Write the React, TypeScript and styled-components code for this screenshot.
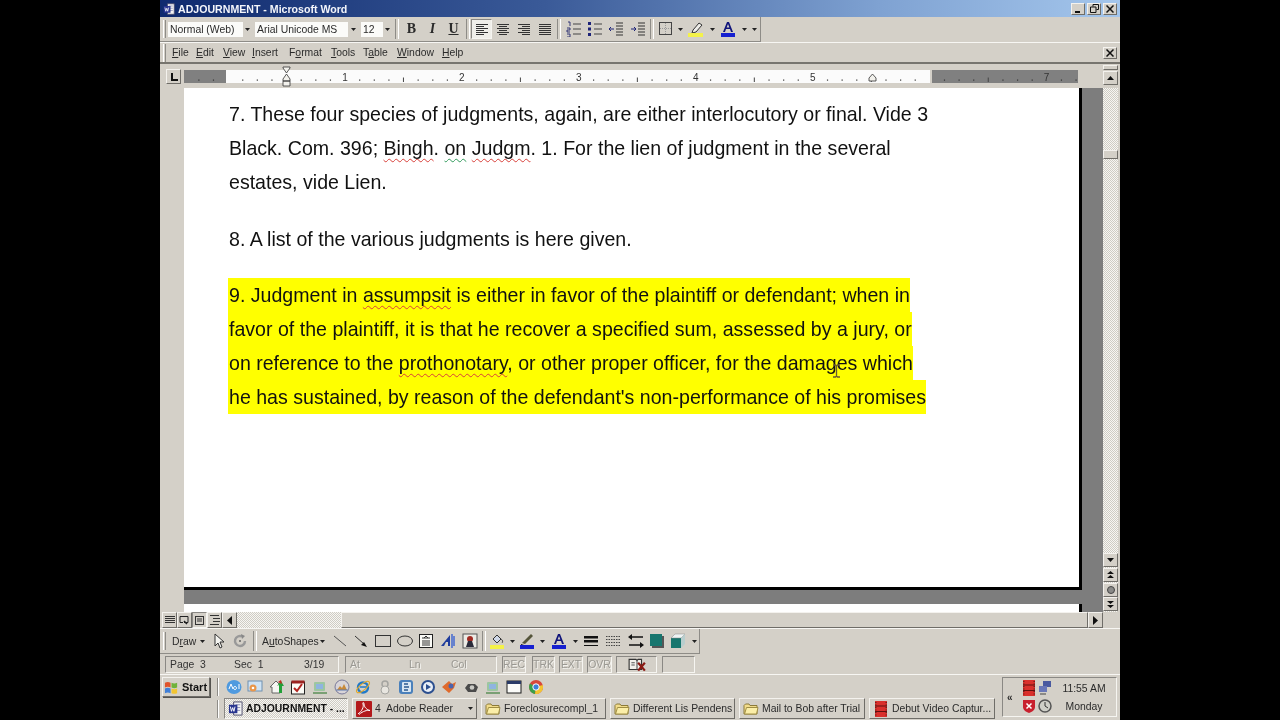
import React from "react";
import styled, { createGlobalStyle, css } from "styled-components";

const GlobalStyle = createGlobalStyle`
  html, body { margin: 0; padding: 0; background: #000; }
  * { box-sizing: border-box; }
`;

const UI = `"Liberation Sans", Arial, sans-serif`;
const FACE = "#d4d0c8";
const raised = css`
  border: 1px solid;
  border-color: #f4f2ee #6f6d68 #6f6d68 #f4f2ee;
`;
const sunken = css`
  border: 1px solid;
  border-color: #8a8884 #f6f5f1 #f6f5f1 #8a8884;
`;
const dither = css`
  background: repeating-conic-gradient(#cfccc4 0 25%, #f7f6f3 0 50%) 0 0 / 2px 2px;
`;

const Stage = styled.div`
  width: 1280px;
  height: 720px;
  background: #000;
  display: flex;
  justify-content: center;
  overflow: hidden;
`;

const Screen = styled.div`
  width: 960px;
  height: 720px;
  background: ${FACE};
  display: flex;
  flex-direction: column;
  font-family: ${UI};
  font-size: 10.4px;
  color: #2b2b2b;
  filter: blur(0.45px);
`;

const TitleBar = styled.div`
  height: 17px;
  flex: none;
  display: flex;
  align-items: center;
  padding: 0 3px;
  gap: 3px;
  background: linear-gradient(90deg, #0f2a6e 0%, #3a5a98 40%, #7fa2d2 75%, #a4c6ec 100%);
`;

const TitleText = styled.div`
  flex: 1;
  color: #f4f6fb;
  font-weight: 700;
  font-size: 10.6px;
  white-space: nowrap;
`;

const WinGroup = styled.div`
  display: flex;
  gap: 2px;
`;

const WinButton = styled.div`
  ${raised}
  width: 14px;
  height: 12px;
  background: ${FACE};
  display: flex;
  align-items: center;
  justify-content: center;
`;

const ToolRow = styled.div<{ $h: number }>`
  height: ${(p) => p.$h}px;
  flex: none;
  display: flex;
  align-items: center;
  background: ${FACE};
`;

const ToolBand = styled.div<{ $w: number }>`
  width: ${(p) => p.$w}px;
  height: 100%;
  display: flex;
  align-items: center;
  border-right: 1px solid #8e8c87;
  border-bottom: 1px solid #8e8c87;
`;

const Grip = styled.div<{ $left: number; $right: number }>`
  width: 3px;
  height: 18px;
  flex: none;
  margin: 0 ${(p) => p.$right}px 0 ${(p) => p.$left}px;
  border-left: 1px solid #fff;
  border-right: 1px solid #8e8c87;
`;

const Combo = styled.div<{ $w: number; $arrow: number; $after: number }>`
  width: ${(p) => p.$w}px;
  height: 15px;
  flex: none;
  margin-right: ${(p) => p.$after}px;
  background: #fbfbf9;
  display: flex;
  align-items: center;
  justify-content: space-between;
  padding-left: 2px;
  white-space: nowrap;
  > i {
    width: ${(p) => p.$arrow}px;
    height: 15px;
    background: ${FACE};
    display: flex;
    align-items: center;
    justify-content: center;
  }
`;

const Slot = styled.div<{ $w: number; $on?: boolean }>`
  width: ${(p) => p.$w}px;
  height: 20px;
  flex: none;
  display: flex;
  align-items: center;
  justify-content: center;
  ${(p) =>
    p.$on &&
    css`
      ${sunken}
      background: #efeee9;
    `}
`;

const Glyph = styled(Slot)<{ $italic?: boolean; $under?: boolean }>`
  font-family: "Liberation Serif", serif;
  font-weight: 700;
  font-size: 14px;
  font-style: ${(p) => (p.$italic ? "italic" : "normal")};
  text-decoration: ${(p) => (p.$under ? "underline" : "none")};
`;

const Sep = styled.div<{ $w: number }>`
  width: ${(p) => p.$w}px;
  height: 20px;
  flex: none;
  display: flex;
  justify-content: center;
  &::after {
    content: "";
    width: 2px;
    height: 100%;
    border-left: 1px solid #8e8c87;
    border-right: 1px solid #fff;
  }
`;

const MenuRow = styled(ToolRow)`
  border-top: 1px solid #f7f6f3;
  border-bottom: 2px solid #77756f;
  padding-right: 3px;
`;

const MenuItem = styled.div<{ $w: number }>`
  width: ${(p) => p.$w}px;
  flex: none;
  white-space: nowrap;
`;

const RowSpacer = styled.div`
  flex: 1;
`;

const RulerRow = styled.div`
  height: 24px;
  flex: none;
  display: flex;
  align-items: flex-start;
`;

const TabStop = styled.div`
  ${raised}
  width: 15px;
  height: 15px;
  flex: none;
  margin: 5px 3px 0 6px;
  display: flex;
  align-items: center;
  justify-content: center;
`;

const RulerSvg = styled.svg`
  flex: none;
  margin-top: 2px;
  overflow: visible;
  font-family: ${UI};
`;

const ScrollColumn = styled.div`
  width: 15px;
  flex: none;
  margin-left: 25px;
`;

const Splitter = styled.div`
  height: 5px;
  margin-top: 1px;
  ${raised}
`;

const ArrowButton = styled.div<{ $top?: number; $h?: number }>`
  ${raised}
  width: 15px;
  height: ${(p) => p.$h ?? 14}px;
  flex: none;
  margin-top: ${(p) => p.$top ?? 0}px;
  background: ${FACE};
  display: flex;
  align-items: center;
  justify-content: center;
`;

const DocRow = styled.div`
  height: 524px;
  flex: none;
  display: flex;
`;

const LeftStrip = styled.div`
  width: 24px;
  flex: none;
  background: ${FACE};
`;

const Canvas = styled.div`
  width: 919px;
  flex: none;
  background: #7d7d7d;
  display: flex;
  flex-direction: column;
  overflow: hidden;
`;

const Page = styled.div`
  position: relative;
  width: 898px;
  height: 502px;
  flex: none;
  background: #fff;
  border-right: 3px solid #000;
  border-bottom: 3px solid #000;
  padding: 9px 0 0 44px;
  font-family: "Liberation Sans", Arial, sans-serif;
  font-size: 19.58px;
  color: #111;
`;

const NextPage = styled.div`
  width: 898px;
  height: 8px;
  margin-top: 14px;
  flex: none;
  background: #fff;
  border-right: 3px solid #000;
`;

const Para = styled.div`
  margin-bottom: 22.5px;
`;

const Line = styled.div<{ $mark?: boolean }>`
  height: 34px;
  line-height: 34px;
  width: fit-content;
  padding-left: 1px;
  white-space: nowrap;
  background: ${(p) => (p.$mark ? "#ffff00" : "transparent")};
`;

const Spell = styled.span<{ $green?: boolean }>`
  text-decoration: underline wavy ${(p) => (p.$green ? "#2f9a5a" : "#d8403a")} 1px;
  text-decoration-skip-ink: none;
  text-underline-offset: 3px;
`;

const Cursor = styled.svg`
  position: absolute;
  left: 648px;
  top: 276px;
`;

const VScroll = styled.div`
  width: 15px;
  flex: none;
  display: flex;
  flex-direction: column;
  ${dither}
`;

const Thumb = styled.div`
  ${raised}
  height: 9px;
  margin-top: 62px;
  background: ${FACE};
`;

const VScrollEnd = styled.div`
  margin-top: auto;
  padding-bottom: 1px;
  display: flex;
  flex-direction: column;
`;

const HScroll = styled.div`
  height: 16px;
  flex: none;
  display: flex;
  align-items: stretch;
  padding-left: 2px;
  padding-right: 17px;
`;

const ViewButton = styled.div<{ $on?: boolean }>`
  ${(p) => (p.$on ? sunken : raised)}
  width: 15px;
  flex: none;
  display: flex;
  align-items: center;
  justify-content: center;
`;

const HTrack = styled.div`
  width: 104px;
  flex: none;
  ${dither}
`;

const HThumb = styled.div`
  ${raised}
  flex: 1;
  background: ${FACE};
`;

const DrawRow = styled(ToolRow)`
  border-top: 1px solid #f7f6f3;
`;

const DrawLabel = styled.div<{ $w: number }>`
  width: ${(p) => p.$w}px;
  flex: none;
  white-space: nowrap;
`;

const StatusRow = styled.div`
  height: 21px;
  flex: none;
  display: flex;
  align-items: center;
  padding: 1px 0 0 5px;
  border-bottom: 1px solid #f7f6f3;
`;

const StatusCell = styled.div<{ $w: number; $after: number; $off?: boolean; $center?: boolean }>`
  ${sunken}
  width: ${(p) => p.$w}px;
  height: 17px;
  flex: none;
  margin-right: ${(p) => p.$after}px;
  display: flex;
  align-items: center;
  justify-content: ${(p) => (p.$center ? "center" : "flex-start")};
  padding-left: ${(p) => (p.$center ? 0 : 4)}px;
  white-space: nowrap;
  color: ${(p) => (p.$off ? "#9a9892" : "#333")};
  text-shadow: ${(p) => (p.$off ? "1px 1px 0 #f2f1ed" : "none")};
`;

const StatusPart = styled.div<{ $w: number }>`
  width: ${(p) => p.$w}px;
  flex: none;
`;

const Taskbar = styled.div`
  height: 45px;
  flex: none;
  display: flex;
`;

const TaskColumn = styled.div`
  width: 842px;
  flex: none;
  display: flex;
  flex-direction: column;
`;

const TopRow = styled.div`
  height: 22px;
  flex: none;
  display: flex;
  align-items: center;
  padding: 2px 0 0 2px;
`;

const StartButton = styled.div`
  ${raised}
  width: 48px;
  height: 20px;
  flex: none;
  display: flex;
  align-items: center;
  gap: 3px;
  padding-left: 1px;
  font-weight: 700;
  font-size: 11px;
  color: #111;
  box-shadow: 1px 1px 0 #55534f;
`;

const LaunchGrip = styled.div<{ $left: number; $right: number }>`
  width: 2px;
  height: 18px;
  flex: none;
  margin: 0 ${(p) => p.$right}px 0 ${(p) => p.$left}px;
  border-left: 1px solid #8e8c87;
  border-right: 1px solid #fff;
`;

const Launch = styled.div`
  display: flex;
  width: 21.57px;
  flex: none;
  justify-content: center;
`;

const ButtonRow = styled.div`
  height: 23px;
  flex: none;
  display: flex;
  align-items: center;
  padding-left: 57px;
  gap: 4px;
`;

const TaskButton = styled.div<{ $w: number; $on?: boolean }>`
  ${(p) => (p.$on ? sunken : raised)}
  width: ${(p) => p.$w}px;
  height: 21px;
  flex: none;
  display: flex;
  align-items: center;
  gap: 3px;
  padding: 0 3px;
  white-space: nowrap;
  overflow: hidden;
  font-weight: ${(p) => (p.$on ? 700 : 400)};
  color: ${(p) => (p.$on ? "#111" : "#2b2b2b")};
  ${(p) => p.$on && dither}
  > span {
    flex: 1;
  }
`;

const Tray = styled.div`
  ${sunken}
  width: 115px;
  height: 40px;
  flex: none;
  margin-top: 2px;
  display: flex;
  align-items: center;
  padding-left: 4px;
`;

const TrayChevron = styled.div`
  width: 14px;
  font-size: 10px;
  font-weight: 700;
`;

const TrayIcons = styled.div`
  width: 34px;
  flex: none;
  display: grid;
  grid-template-columns: 16px 16px;
  gap: 2px 0;
`;

const Clock = styled.div`
  flex: 1;
  display: flex;
  flex-direction: column;
  align-items: center;
  gap: 5px;
  line-height: 13px;
  padding-right: 3px;
`;

const IcoSvg = styled.svg`
  flex: none;
  display: block;
`;

const Ico = ({ s = 16, children }: { s?: number; children: React.ReactNode }) => (
  <IcoSvg width={s} height={s} viewBox="0 0 16 16">
    {children}
  </IcoSvg>
);

const Down = () => (
  <svg width="5" height="3" viewBox="0 0 5 3">
    <path d="M0 0h5L2.500 3z" fill="#222" />
  </svg>
);

const Rows = ({ rows, color = "#333" }: { rows: [number, number, number][]; color?: string }) => (
  <Ico>
    {rows.map(([y, a, b], i) => (
      <rect key={i} x={a} y={y} width={b - a} height={1} fill={color} />
    ))}
  </Ico>
);

const alignLeft: [number, number, number][] = [[3, 2, 14], [5, 2, 10], [7, 2, 14], [9, 2, 10], [11, 2, 14], [13, 2, 10]];
const alignCenter: [number, number, number][] = [[3, 2, 14], [5, 4, 12], [7, 2, 14], [9, 4, 12], [11, 2, 14], [13, 4, 12]];
const alignRight: [number, number, number][] = [[3, 2, 14], [5, 6, 14], [7, 2, 14], [9, 6, 14], [11, 2, 14], [13, 6, 14]];
const justify: [number, number, number][] = [[3, 2, 14], [5, 2, 14], [7, 2, 14], [9, 2, 14], [11, 2, 14], [13, 2, 14]];

const Numbering = () => (
  <Ico>
    <path d="M7 3h8M7 8h8M7 13h8" stroke="#444" />
    <path d="M2 1h2v4M1 7h3v2H1v2h3M1 13h3v3H1" stroke="#22266e" fill="none" strokeWidth="0.9" />
  </Ico>
);
const Bullets = () => (
  <Ico>
    <path d="M7 3h8M7 8h8M7 13h8" stroke="#444" />
    <path d="M1 1h3v3H1zM1 6.500h3v3H1zM1 12h3v3H1z" fill="#1d2378" />
  </Ico>
);
const Outdent = () => (
  <Ico>
    <path d="M8 2h7M8 5h7M8 8h7M8 11h7M8 14h7" stroke="#333" />
    <path d="M6 8H1M3 6 1 8l2 2" stroke="#1d2378" fill="none" />
  </Ico>
);
const Indent = () => (
  <Ico>
    <path d="M8 2h7M8 5h7M8 8h7M8 11h7M8 14h7" stroke="#333" />
    <path d="M1 8h5M4 6l2 2-2 2" stroke="#1d2378" fill="none" />
  </Ico>
);
const Borders = () => (
  <Ico>
    <rect x="1.500" y="1.500" width="12" height="12" fill="none" stroke="#444" />
    <path d="M7.500 2v11M2 7.500h11" stroke="#999" strokeDasharray="1 1" />
  </Ico>
);
const Highlighter = () => (
  <Ico>
    <path d="M5 9 11 2l3 2-6 7-4 1z" fill="#efeee9" stroke="#333" />
    <rect x="0" y="12" width="15" height="4" fill="#f4f24a" />
  </Ico>
);
const FontColor = ({ bar = "#1620d0" }: { bar?: string }) => (
  <Ico>
    <path d="M3 11 7 1h2l4 10h-2l-1-3H6l-1 3zM6.600 6.500h2.800L8 3z" fill="#10147a" />
    <rect x="1" y="12" width="14" height="4" fill={bar} />
  </Ico>
);
const WordDoc = ({ s = 12 }: { s?: number }) => (
  <Ico s={s}>
    <path d="M6 1h9v14H6z" fill="#f4f4f4" stroke="#4a4a6a" />
    <path d="M8 4h5M8 7h5M8 10h5" stroke="#8b8fb5" />
    <rect x="1" y="4" width="9" height="9" fill="#27348f" />
    <path d="M2.500 6l1.200 5 1.300-4 1.300 4L7.500 6" stroke="#fff" fill="none" />
  </Ico>
);
const Folder = () => (
  <Ico>
    <path d="M1 4.500 2.500 3H6l1 1.500h7V13H1z" fill="#f2dc8a" stroke="#8b7a3a" />
    <path d="M1.500 13 3.500 6.500H15L13.500 13z" fill="#fbeea8" stroke="#a08e44" />
  </Ico>
);
const FilmRed = ({ s = 16 }: { s?: number }) => (
  <Ico s={s}>
    <rect x="2" y="0" width="12" height="16" fill="#d9302c" />
    <path d="M2 5h12M2 10.500h12" stroke="#60100e" strokeWidth="1.200" />
    <path d="M2.800 1v14M13.200 1v14" stroke="#5a1a18" strokeDasharray="1 1.500" strokeWidth="1.200" />
  </Ico>
);
const Acrobat = () => (
  <Ico>
    <rect x="0" y="0" width="16" height="16" rx="1" fill="#b3191b" />
    <path d="M2 13C6 10 8 6 7 3c-.7-2 1-2 1 0 0 3 3 6 6 6.500-3-.5-7 .500-11 4" stroke="#fff" fill="none" strokeWidth="1" />
  </Ico>
);

const launchIcons: React.ReactNode[] = [
  <Ico key="aol"><ellipse cx="8" cy="8" rx="7.500" ry="7" fill="#4f9adf" /><path d="M3 10 5 5l2 5M9 7.500a1.500 1.500 0 1 0 .01 0M13 5v5" stroke="#fff" fill="none" /></Ico>,
  <Ico key="mail"><rect x="1" y="2" width="14" height="10" fill="#cfe3f4" stroke="#6f90b0" /><circle cx="6" cy="9" r="3.500" fill="#e9964a" /><circle cx="6" cy="9" r="1.300" fill="#fff" /></Ico>,
  <Ico key="home"><path d="M1 8 7 2l4 4v8H3V8z" fill="#f6f6f2" stroke="#666" /><path d="M10 14V6l-2 1 4-5 3 5h-2v7z" fill="#22a038" /><path d="M9 3l3-2 1 4z" fill="#c6291f" /></Ico>,
  <Ico key="cal"><rect x="1.500" y="3" width="13" height="12" fill="#fbfbf6" stroke="#222" /><rect x="1.500" y="1.500" width="13" height="3" fill="#9c2320" /><path d="M4 9l3 3 5-7" stroke="#b3231f" strokeWidth="2" fill="none" /></Ico>,
  <Ico key="net"><rect x="2" y="3" width="11" height="9" rx="1" fill="#9cc6a0" /><rect x="4" y="5" width="7" height="5" fill="#8fb4e0" /><path d="M1 14h14" stroke="#7aa074" strokeWidth="2" /></Ico>,
  <Ico key="ball"><circle cx="8" cy="8" r="7" fill="#d8d4d8" stroke="#7a7a9a" /><path d="M3 11l3-4 2 2 2-4 3 6z" fill="#c98a3a" /><path d="M2 11h12" stroke="#5b7ab0" /></Ico>,
  <Ico key="ie"><circle cx="8" cy="8.500" r="5" fill="none" stroke="#1f79c9" strokeWidth="2.400" /><path d="M5 8h8" stroke="#1f79c9" strokeWidth="1.500" /><ellipse cx="8" cy="8" rx="8" ry="3" fill="none" stroke="#e0a728" transform="rotate(-40 8 8)" /></Ico>,
  <Ico key="lock"><circle cx="8" cy="5" r="3" fill="none" stroke="#a4a4a0" strokeWidth="1.500" /><circle cx="8" cy="11" r="4" fill="#e8e6e0" stroke="#a4a4a0" /></Ico>,
  <Ico key="globe"><rect x="1" y="1" width="14" height="14" rx="3" fill="#4a80bb" /><rect x="4" y="3" width="9" height="10" rx="1" fill="#d8e6f2" /><path d="M6 5h4M6 8h5M6 11h4" stroke="#2b5a90" strokeWidth="1.400" /></Ico>,
  <Ico key="media"><circle cx="8" cy="8" r="7" fill="#2c4f8f" /><circle cx="8" cy="8" r="5" fill="#e8eef6" /><path d="M6 5l5 3-5 3z" fill="#2c4f8f" /></Ico>,
  <Ico key="fox"><path d="M1 8 8 2l3 3 4-2-2 6-5 5z" fill="#df6a2c" /><circle cx="10" cy="7" r="2.500" fill="#4b64ae" /></Ico>,
  <Ico key="gear"><path d="M2 9l3-4h7l3 3-2 5H5z" fill="#4a4a4a" /><circle cx="9" cy="8.500" r="2.300" fill="#c9c9c4" /></Ico>,
  <Ico key="net2"><rect x="2" y="3" width="11" height="9" rx="1" fill="#9cc6a0" /><rect x="4" y="5" width="7" height="5" fill="#8fb4e0" /><path d="M1 14h14" stroke="#7aa074" strokeWidth="2" /></Ico>,
  <Ico key="win"><rect x="1" y="2" width="14" height="12" fill="#fbfbf8" stroke="#1c1c1c" /><rect x="1" y="2" width="14" height="3" fill="#2a3a66" /></Ico>,
  <Ico key="chrome"><circle cx="8" cy="8" r="7" fill="#d8473a" /><path d="M8 8 2 4.500A7 7 0 0 0 7 15z" fill="#3aa04a" /><path d="M8 8l6.700-2A7 7 0 0 1 7 15z" fill="#f2c531" /><circle cx="8" cy="8" r="3.200" fill="#3f7fd8" stroke="#fff" /></Ico>,
];

const rulerTicks = () => {
  const out: React.ReactNode[] = [];
  const zero = 44;
  for (let n = -3; n <= 58; n++) {
    const x = zero + n * 14.62;
    if (x < 2 || x > 892 || n === 0) continue;
    if (n % 8 === 0) continue;
    if (n % 4 === 0) out.push(<rect key={n} x={x - 0.5} y={7.500} width={1} height={4.500} fill="#444" />);
    else out.push(<rect key={n} x={x - 0.5} y={9.500} width={1.200} height={1.200} fill="#333" />);
  }
  for (let n = 4; n <= 52; n += 4) {
    out.push(<rect key={`t${n}`} x={zero + n * 14.62 - 0.5} y={18} width={1} height={2} fill="#8e8c87" />);
  }
  return out;
};

const rulerNums = [1, 2, 3, 4, 5, 7];

const CloseGlyph = () => (
  <svg width="8" height="8" stroke="#111" strokeWidth="1.500">
    <path d="M.5.5l7 7M7.500.5l-7 7" />
  </svg>
);

export default function App() {
  return (
    <Stage>
      <GlobalStyle />
      <Screen>
        <TitleBar>
          <WordDoc />
          <TitleText>ADJOURNMENT - Microsoft Word</TitleText>
          <WinGroup>
            <WinButton>
              <svg width="8" height="8"><rect x="1" y="6" width="5" height="2" fill="#111" /></svg>
            </WinButton>
            <WinButton>
              <svg width="9" height="9" fill="none" stroke="#111"><path d="M3 2.500V.5h5.500v5H6.500M.5 3h5.500v5.500H.5z" /></svg>
            </WinButton>
            <WinButton><CloseGlyph /></WinButton>
          </WinGroup>
        </TitleBar>

        <ToolRow $h={25}>
          <ToolBand $w={601}>
            <Grip $left={3} $right={2} />
            <Combo $w={83} $arrow={8} $after={4}>Normal (Web)<i><Down /></i></Combo>
            <Combo $w={103} $arrow={10} $after={3}>Arial Unicode MS<i><Down /></i></Combo>
            <Combo $w={31} $arrow={9} $after={0}>12<i><Down /></i></Combo>
            <Sep $w={9} />
            <Glyph $w={21}>B</Glyph>
            <Glyph $w={21} $italic>I</Glyph>
            <Glyph $w={21} $under>U</Glyph>
            <Sep $w={7} />
            <Slot $w={21} $on><Rows rows={alignLeft} /></Slot>
            <Slot $w={21}><Rows rows={alignCenter} /></Slot>
            <Slot $w={21}><Rows rows={alignRight} /></Slot>
            <Slot $w={21}><Rows rows={justify} /></Slot>
            <Sep $w={8} />
            <Slot $w={21}><Numbering /></Slot>
            <Slot $w={21}><Bullets /></Slot>
            <Slot $w={22}><Outdent /></Slot>
            <Slot $w={21}><Indent /></Slot>
            <Sep $w={8} />
            <Slot $w={20}><Borders /></Slot>
            <Slot $w={8}><Down /></Slot>
            <Slot $w={24}><Highlighter /></Slot>
            <Slot $w={8}><Down /></Slot>
            <Slot $w={24}><FontColor /></Slot>
            <Slot $w={8}><Down /></Slot>
            <Slot $w={12}><Down /></Slot>
          </ToolBand>
        </ToolRow>

        <MenuRow $h={22}>
          <Grip $left={3} $right={6} />
          <MenuItem $w={24}><u>F</u>ile</MenuItem>
          <MenuItem $w={27}><u>E</u>dit</MenuItem>
          <MenuItem $w={29}><u>V</u>iew</MenuItem>
          <MenuItem $w={37}><u>I</u>nsert</MenuItem>
          <MenuItem $w={42}>F<u>o</u>rmat</MenuItem>
          <MenuItem $w={32}><u>T</u>ools</MenuItem>
          <MenuItem $w={34}>T<u>a</u>ble</MenuItem>
          <MenuItem $w={45}><u>W</u>indow</MenuItem>
          <MenuItem $w={30}><u>H</u>elp</MenuItem>
          <RowSpacer />
          <WinButton><CloseGlyph /></WinButton>
        </MenuRow>

        <RulerRow>
          <TabStop>
            <svg width="8" height="8" fill="none" stroke="#111" strokeWidth="2"><path d="M2 0v7h6" /></svg>
          </TabStop>
          <RulerSvg width="894" height="22" viewBox="0 -2 894 22">
            <rect x="0" y="2" width="42" height="13" fill="#808080" />
            <rect x="42" y="2" width="704" height="13" fill="#fbfbfb" />
            <rect x="748" y="2" width="146" height="13" fill="#808080" />
            <g transform="translate(0,2)">{rulerTicks()}</g>
            {rulerNums.map((n) => (
              <text key={n} x={44 + n * 116.95} y={12.500} fontSize="10" textAnchor="middle" fill="#333">{n}</text>
            ))}
            <path d="M99 -1h7v1l-3.500 5-3.500-5zM102.500 6l3.500 5v2h-7v-2zM99 13h7v5h-7z" fill="#f2f1ec" stroke="#333" strokeWidth="0.800" />
            <path d="M685 13v-3l3.500-4 3.500 4v3z" fill="#f2f1ec" stroke="#333" strokeWidth="0.800" />
          </RulerSvg>
          <ScrollColumn>
            <Splitter />
            <ArrowButton $top={1}>
              <svg width="7" height="4"><path d="M0 4h7L3.500 0z" fill="#111" /></svg>
            </ArrowButton>
          </ScrollColumn>
        </RulerRow>

        <DocRow>
          <LeftStrip />
          <Canvas>
            <Page>
              <Para>
                <Line>7. These four species of judgments, again, are either interlocutory or final. Vide 3</Line>
                <Line>Black. Com. 396; <Spell>Bingh</Spell>. <Spell $green>on</Spell> <Spell>Judgm</Spell>. 1. For the lien of judgment in the several</Line>
                <Line>estates, vide Lien.</Line>
              </Para>
              <Para>
                <Line>8. A list of the various judgments is here given.</Line>
              </Para>
              <Para>
                <Line $mark>9. Judgment in <Spell>assumpsit</Spell> is either in favor of the plaintiff or defendant; when in</Line>
                <Line $mark>favor of the plaintiff, it is that he recover a specified sum, assessed by a jury, or</Line>
                <Line $mark>on reference to the <Spell>prothonotary</Spell>, or other proper officer, for the damages which</Line>
                <Line $mark>he has sustained, by reason of the defendant's non-performance of his promises</Line>
              </Para>
              <Cursor width="9" height="14" viewBox="0 0 9 14">
                <path d="M1 1h2.500l1 1 1-1H8M4.500 2v10M1 13h2.500l1-1 1 1H8" stroke="#6a5a30" strokeWidth="1.300" fill="none" />
              </Cursor>
            </Page>
            <NextPage />
          </Canvas>
          <VScroll>
            <Thumb />
            <VScrollEnd>
              <ArrowButton>
                <svg width="7" height="4"><path d="M0 0h7L3.500 4z" fill="#111" /></svg>
              </ArrowButton>
              <ArrowButton $top={1}>
                <svg width="7" height="8" fill="#111"><path d="M0 3h7L3.500 0zM0 7h7L3.500 4z" /></svg>
              </ArrowButton>
              <ArrowButton $top={1}>
                <svg width="8" height="8"><circle cx="4" cy="4" r="3.500" fill="#8a8a88" stroke="#444" /></svg>
              </ArrowButton>
              <ArrowButton>
                <svg width="7" height="8" fill="#111"><path d="M0 1h7L3.500 4zM0 5h7L3.500 8z" /></svg>
              </ArrowButton>
            </VScrollEnd>
          </VScroll>
        </DocRow>

        <HScroll>
          <ViewButton><Rows rows={[[4, 3, 13], [6, 3, 13], [8, 3, 13], [10, 3, 13]]} /></ViewButton>
          <ViewButton>
            <svg width="11" height="11" fill="none" stroke="#222"><path d="M1 1.500h8v6H5M1 1.500v6h3" /><path d="M5 6l3 3" strokeWidth="1.500" /></svg>
          </ViewButton>
          <ViewButton $on>
            <svg width="11" height="11" fill="none" stroke="#333"><rect x="1.500" y="1.500" width="8" height="8" /><path d="M3 4h5M3 6h5" /></svg>
          </ViewButton>
          <ViewButton><Rows rows={[[3, 3, 12], [6, 6, 13], [9, 6, 13], [12, 3, 12]]} /></ViewButton>
          <ViewButton>
            <svg width="5" height="9"><path d="M5 0v9L0 4.500z" fill="#111" /></svg>
          </ViewButton>
          <HTrack />
          <HThumb />
          <ArrowButton $h={16}>
            <svg width="5" height="9"><path d="M0 0v9L5 4.500z" fill="#111" /></svg>
          </ArrowButton>
        </HScroll>

        <DrawRow $h={26}>
          <ToolBand $w={540}>
            <Grip $left={3} $right={6} />
            <DrawLabel $w={27}>D<u>r</u>aw</DrawLabel>
            <Slot $w={7}><Down /></Slot>
            <Slot $w={5} />
            <Slot $w={16}>
              <Ico><path d="M4 1v12l3-3 2 5 2-1-2-5h4z" fill="#f4f4f0" stroke="#333" /></Ico>
            </Slot>
            <Slot $w={26}>
              <Ico><path d="M13 8a5 5 0 1 1-3-4.600" fill="none" stroke="#999" strokeWidth="2.400" /><path d="M9 1l4 2-3 3z" fill="#888" /><circle cx="8" cy="8" r="1" fill="#666" /></Ico>
            </Slot>
            <Sep $w={4} />
            <Slot $w={5} />
            <DrawLabel $w={57}>A<u>u</u>toShapes</DrawLabel>
            <Slot $w={7}><Down /></Slot>
            <Slot $w={4} />
            <Slot $w={20}>
              <Ico><path d="M2 3l12 10" stroke="#555" /></Ico>
            </Slot>
            <Slot $w={22}>
              <Ico><path d="M2 3l9 8" stroke="#333" /><path d="M14 14l-6-2 3-3z" fill="#111" /></Ico>
            </Slot>
            <Slot $w={22}>
              <Ico><rect x="0.500" y="2.500" width="15" height="11" fill="none" stroke="#333" /></Ico>
            </Slot>
            <Slot $w={21}>
              <Ico><ellipse cx="8" cy="8" rx="7.500" ry="5" fill="none" stroke="#333" /></Ico>
            </Slot>
            <Slot $w={22}>
              <Ico><rect x="1.500" y="1.500" width="13" height="13" fill="#fafaf6" stroke="#222" /><path d="M4 5h8M4 8h8M4 10h8M4 12h8" stroke="#333" /><path d="M6 5l2-2 2 2" stroke="#333" fill="none" /></Ico>
            </Slot>
            <Slot $w={21}>
              <Ico><path d="M1 13 10 2v11H8V9H6l-2 4z" fill="#1f3c9c" /><path d="M12 1v14M14 3v10" stroke="#3a62d0" strokeWidth="1.400" /></Ico>
            </Slot>
            <Slot $w={23}>
              <Ico><rect x="1" y="1" width="14" height="14" fill="#ecebe5" stroke="#555" /><circle cx="8" cy="6" r="3" fill="#a12a22" /><path d="M4 14l2-6h4l2 6z" fill="#2b2b3a" /></Ico>
            </Slot>
            <Sep $w={5} />
            <Slot $w={22}>
              <Ico><path d="M4 6l4-4 4 4-4 4z" fill="#cfd8e8" stroke="#333" /><path d="M12 6c2 1 2 3 1 4" stroke="#555" fill="none" /><rect x="1" y="12" width="14" height="4" fill="#f4f24a" /></Ico>
            </Slot>
            <Slot $w={8}><Down /></Slot>
            <Slot $w={22}>
              <Ico><path d="M3 10 12 1l2 2-8 8z" fill="#55553a" /><path d="M2 11l3 0-3 1z" fill="#111" /><rect x="1" y="12" width="14" height="4" fill="#1620d0" /></Ico>
            </Slot>
            <Slot $w={9}><Down /></Slot>
            <Slot $w={24}><FontColor /></Slot>
            <Slot $w={8}><Down /></Slot>
            <Slot $w={23}>
              <Ico><rect x="1" y="3" width="14" height="2.500" fill="#111" /><rect x="1" y="7" width="14" height="2.500" fill="#111" /><rect x="1" y="12" width="14" height="1" fill="#111" /></Ico>
            </Slot>
            <Slot $w={22}>
              <Ico><path d="M1 3.500h14M1 6.500h14M1 9.500h14M1 12.500h14" stroke="#444" strokeDasharray="1.500 1" /></Ico>
            </Slot>
            <Slot $w={23}>
              <Ico><path d="M3 4h12M1 12h12" stroke="#111" strokeWidth="1.500" /><path d="M0 4l4-3v6zM16 12l-4-3v6z" fill="#111" /></Ico>
            </Slot>
            <Slot $w={19}>
              <Ico><rect x="3" y="3" width="12" height="12" fill="#555" /><rect x="1" y="1" width="12" height="12" fill="#17766e" /></Ico>
            </Slot>
            <Slot $w={23}>
              <Ico><path d="M1 5v10h10V5z" fill="#17766e" /><path d="M1 5l4-4h10L11 5z" fill="#eef4f4" stroke="#888" strokeWidth="0.500" /><path d="M11 5l4-4v10l-4 4z" fill="#b9cece" /></Ico>
            </Slot>
            <Slot $w={10}><Down /></Slot>
          </ToolBand>
        </DrawRow>

        <StatusRow>
          <StatusCell $w={174} $after={6}>
            <StatusPart $w={64}>Page&nbsp;&nbsp;3</StatusPart>
            <StatusPart $w={70}>Sec&nbsp;&nbsp;1</StatusPart>
            <StatusPart $w={30}>3/19</StatusPart>
          </StatusCell>
          <StatusCell $w={152} $after={5} $off>
            <StatusPart $w={59}>At</StatusPart>
            <StatusPart $w={42}>Ln</StatusPart>
            <StatusPart $w={30}>Col</StatusPart>
          </StatusCell>
          <StatusCell $w={24} $after={6} $off $center>REC</StatusCell>
          <StatusCell $w={23} $after={4} $off $center>TRK</StatusCell>
          <StatusCell $w={24} $after={4} $off $center>EXT</StatusCell>
          <StatusCell $w={25} $after={4} $off $center>OVR</StatusCell>
          <StatusCell $w={41} $after={5} $center>
            <Ico s={18}>
              <path d="M1 3h6l1 1 1-1h3v9H1z" fill="#f2f1ec" stroke="#333" />
              <path d="M8 4v8M3 6h3M3 8h3" stroke="#555" />
              <path d="M9 6l6 7M15 6l-6 7" stroke="#8b1a14" strokeWidth="2" />
            </Ico>
          </StatusCell>
          <StatusCell $w={33} $after={0} />
        </StatusRow>

        <Taskbar>
          <TaskColumn>
            <TopRow>
              <StartButton>
                <Ico s={15}>
                  <path d="M1 3c2-1 4-1 6 0v5c-2-1-4-1-6 0z" fill="#e0542c" />
                  <path d="M8 3c2 1 4 1 6 0v5c-2 1-4 1-6 0z" fill="#6fb23a" />
                  <path d="M1 9c2-1 4-1 6 0v5c-2-1-4-1-6 0z" fill="#3f7fd8" />
                  <path d="M8 9c2 1 4 1 6 0v5c-2 1-4 1-6 0z" fill="#f2c531" />
                </Ico>
                Start
              </StartButton>
              <LaunchGrip $left={7} $right={4} />
              {launchIcons.map((ic, i) => (
                <Launch key={i}>{ic}</Launch>
              ))}
            </TopRow>
            <ButtonRow>
              <LaunchGrip $left={0} $right={1} />
              <TaskButton $w={124} $on><WordDoc s={15} /><span>ADJOURNMENT - ...</span></TaskButton>
              <TaskButton $w={125}>
                <Acrobat />
                <span>4&nbsp; Adobe Reader</span>
                <Down />
              </TaskButton>
              <TaskButton $w={125}><Folder /><span>Foreclosurecompl_1</span></TaskButton>
              <TaskButton $w={125}><Folder /><span>Different Lis Pendens</span></TaskButton>
              <TaskButton $w={126}><Folder /><span>Mail to Bob after Trial</span></TaskButton>
              <TaskButton $w={126}><FilmRed /><span>Debut Video Captur...</span></TaskButton>
            </ButtonRow>
          </TaskColumn>
          <Tray>
            <TrayChevron>«</TrayChevron>
            <TrayIcons>
              <FilmRed />
              <Ico><rect x="6" y="1" width="8" height="6" fill="#4a5aa0" /><rect x="2" y="6" width="8" height="6" fill="#6a78b8" /><path d="M3 14h6" stroke="#444" /></Ico>
              <Ico><path d="M2 2h12v7c0 3-3 5-6 6-3-1-6-3-6-6z" fill="#c8202e" /><path d="M5.500 5.500l5 5M10.500 5.500l-5 5" stroke="#fff" strokeWidth="1.500" /></Ico>
              <Ico><circle cx="8" cy="8" r="6" fill="#cfcfc8" stroke="#555" strokeWidth="1.500" /><path d="M8 4v4l3 2" stroke="#333" fill="none" /></Ico>
            </TrayIcons>
            <Clock>
              <div>11:55 AM</div>
              <div>Monday</div>
            </Clock>
          </Tray>
        </Taskbar>
      </Screen>
    </Stage>
  );
}
